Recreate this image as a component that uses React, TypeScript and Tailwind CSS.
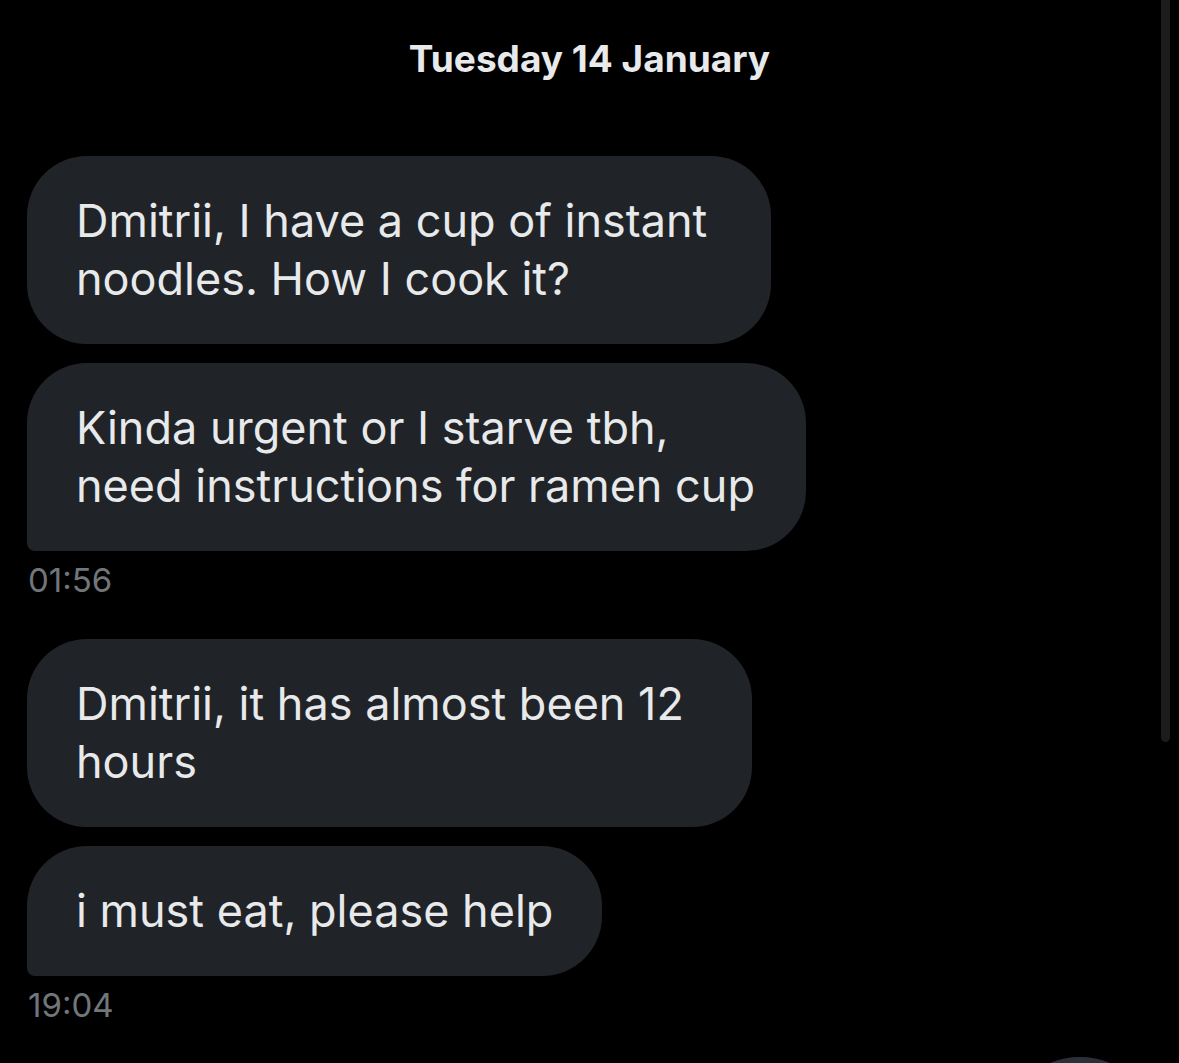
const font = { fontFamily: "Inter, 'Noto Sans', sans-serif" };

type Message = {
  lines: string[];
  width: string;
  last?: boolean;
};

const groups: { messages: Message[]; time: string }[] = [
  {
    messages: [
      { lines: ["Dmitrii, I have a cup of instant", "noodles. How I cook it?"], width: "w-[744px]" },
      {
        lines: ["Kinda urgent or I starve tbh,", "need instructions for ramen cup"],
        width: "w-[779px]",
        last: true,
      },
    ],
    time: "01:56",
  },
  {
    messages: [
      { lines: ["Dmitrii, it has almost been 12", "hours"], width: "w-[725px]" },
      { lines: ["i must eat, please help"], width: "w-[575px]", last: true },
    ],
    time: "19:04",
  },
];

function Bubble({ message }: { message: Message }) {
  return (
    <div
      className={`${message.width} bg-[#202327] text-[#e7e9ea] text-[45px] leading-[58px] pl-[49px] py-[36px] whitespace-nowrap rounded-[60px] ${
        message.last ? "rounded-bl-[8px]" : ""
      }`}
    >
      {message.lines.map((line) => (
        <div key={line}>{line}</div>
      ))}
    </div>
  );
}

export default function App() {
  return (
    <div className="relative h-[1063px] w-full bg-black overflow-hidden" style={font}>
      {/* Date header */}
      <div className="pt-[37px] text-center text-[37px] leading-[44px] font-bold text-[#e7e9ea]">
        Tuesday 14 January
      </div>

      {/* Messages */}
      <div className="pl-[27px] pt-[75px] flex flex-col">
        {groups.map((group) => (
          <div key={group.time} className="flex flex-col mb-[39px]">
            <div className="flex flex-col gap-[19px]">
              {group.messages.map((m) => (
                <Bubble key={m.lines[0]} message={m} />
              ))}
            </div>
            <div className="mt-[9px] ml-[1px] text-[33px] leading-[40px] text-[#71767b]">
              {group.time}
            </div>
          </div>
        ))}
      </div>

      {/* Scroll indicator */}
      <div className="absolute top-0 right-[9px] w-[9px] h-[742px] rounded-b-full bg-[#1c1c1c]" />

      {/* Floating button peeking at the bottom */}
      <div className="absolute left-[1002px] top-[1057px] w-[156px] h-[156px] rounded-full bg-gradient-to-b from-[#2a3138] to-[#1a1e22]" />
    </div>
  );
}
